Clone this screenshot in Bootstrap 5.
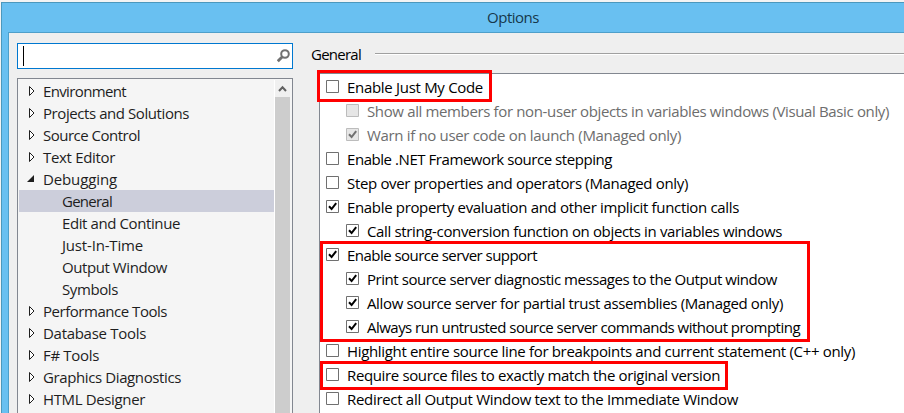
<!DOCTYPE html>
<html lang="en">
<head>
<meta charset="utf-8">
<title>Options</title>
<link href="https://cdn.jsdelivr.net/npm/bootstrap@5.3.0/dist/css/bootstrap.min.css" rel="stylesheet">
<style>
body{width:904px;height:413px;background:#f4f4f4;font-family:"Open Sans","Noto Sans",sans-serif;font-size:15px;line-height:22px;color:#1e1e1e;letter-spacing:-.2px}
.window-frame{margin:2px 0 0 1px;height:411px;border:solid #4c98bd;border-width:1px 0 0 1px;background:#69c0f1}
.title-row{height:29px;padding-left:485px;padding-top:3px;color:#16384b}
.client{margin-left:6px;height:381px;border:solid #4e9fca;border-width:1px 0 0 1px;background:#efefef;padding-left:8px}
.left-pane{width:276px;padding-top:10px}
.search-box{height:26px;border:1px solid #0078d0;background:#fff;padding:0 2px 0 5px}
.caret{width:1px;height:20px;background:#000}
.tree{margin-top:9px;height:336px;border:1px solid #828790;background:#f5f5f5;padding:1px 2px 0 1px}
.tree-row{height:22px;padding-left:8px}
.tree-row svg{width:16px;height:22px;flex:none}
.tree-row.sub{padding-left:43px}
.tree-row.picked{background:#cccedb}
.scroller{width:16px;border-left:1px solid #fff;background:#cdcdcd}
.scroller svg{display:block;background:#f0f0f0}
.right-pane{margin-left:18px;padding-top:10px;color:#000}
.pane-head{height:22px}
.rule{height:2px;margin-left:14px;background:#fff;border-top:1px solid #a0a0a0}
.options{margin:8px 0 0 8px;height:341px;border:solid #828790;border-width:1px 0 0 1px;background:#fff;padding:1px 0 0 6px}
.opt{height:24px}
.opt.sub{padding-left:20px}
.opt svg{width:13px;height:13px;margin:5px 8px 0 0;flex:none}
.opt span{line-height:24px}
.opt.off{color:#6d6d6d}
.hl{border:3px solid #f00}
.hl-a{left:317px;top:70px;width:175px;height:32px}
.hl-b{left:320px;top:241px;width:490px;height:101px}
.hl-c{left:320px;top:361px;width:408px;height:29px}
</style>
</head>
<body class="overflow-hidden position-relative">
<svg class="d-none">
<symbol id="shut" viewBox="0 0 16 22"><path d="M2.5 6.5v9l4.5-4.5z" fill="#fff" stroke="#1e1e1e"/></symbol>
<symbol id="open" viewBox="0 0 16 22"><path d="M7 7v7H0z" fill="#1e1e1e"/></symbol>
<symbol id="box" viewBox="0 0 13 13"><path d="M.5.5h12v12H.5z" fill="#fff" stroke="#707070"/></symbol>
<symbol id="tick" viewBox="0 0 13 13"><path d="M.5.5h12v12H.5z" fill="#fff" stroke="#707070"/><path d="M3 6.3 5.6 9 10.2 3.2" fill="none" stroke="#000" stroke-width="2"/></symbol>
<symbol id="boxoff" viewBox="0 0 13 13"><path d="M.5.5h12v12H.5z" fill="#e6e6e6" stroke="#bcbcbc"/></symbol>
<symbol id="tickoff" viewBox="0 0 13 13"><path d="M.5.5h12v12H.5z" fill="#e6e6e6" stroke="#bcbcbc"/><path d="M3 6.3 5.6 9 10.2 3.2" fill="none" stroke="#707070" stroke-width="2"/></symbol>
</svg>
<main class="window-frame text-nowrap">
<header class="title-row"><span data-w="52">Options</span></header>
<div class="client d-flex">
<aside class="left-pane flex-shrink-0">
<div class="search-box d-flex align-items-center justify-content-between"><div class="caret"></div>
<svg width="13" height="14" viewBox="0 0 13 14"><circle cx="8" cy="5" r="3.8" fill="none" stroke="#717171" stroke-width="2"/><path d="M5.3 7.7.8 12.2" stroke="#717171" stroke-width="2.8"/></svg></div>
<div class="tree d-flex">
<div class="flex-grow-1" id="tree"></div>
<div class="scroller"><svg width="15" height="17" viewBox="0 0 15 17"><path d="M4 11l3.5-3.8L11 11" fill="none" stroke="#606060" stroke-width="2"/></svg></div>
</div>
</aside>
<section class="right-pane flex-grow-1">
<div class="pane-head d-flex align-items-center"><span data-w="50">General</span><div class="rule flex-grow-1"></div></div>
<div class="options" id="options"></div>
</section>
</div>
</main>
<div class="hl hl-a position-absolute"></div>
<div class="hl hl-b position-absolute"></div>
<div class="hl hl-c position-absolute"></div>
<script src="https://cdn.jsdelivr.net/npm/bootstrap@5.3.0/dist/js/bootstrap.bundle.min.js"></script>
<script>
// [label, label width, icon ('' for a child), row class]
const tree = [
 ['Environment',83,'shut'],['Projects and Solutions',146,'shut'],['Source Control',97,'shut'],['Text Editor',72,'shut'],['Debugging',74,'open'],
 ['General',50,'','sub picked'],['Edit and Continue',118,'','sub'],['Just-In-Time',81,'','sub'],['Output Window',105,'','sub'],['Symbols',56,'','sub'],
 ['Performance Tools',124,'shut'],['Database Tools',103,'shut'],['F# Tools',56,'shut'],['Graphics Diagnostics',138,'shut'],['HTML Designer',102,'shut']];
const options = [
 ['Enable Just My Code',136,'box'],
 ['Show all members for non-user objects in variables windows (Visual Basic only)',522,'boxoff','sub off'],
 ['Warn if no user code on launch (Managed only)',314,'tickoff','sub off'],
 ['Enable .NET Framework source stepping',265,'box'],
 ['Step over properties and operators (Managed only)',341,'box'],
 ['Enable property evaluation and other implicit function calls',392,'tick'],
 ['Call string-conversion function on objects in variables windows',415,'tick','sub'],
 ['Enable source server support',190,'tick'],
 ['Print source server diagnostic messages to the Output window',410,'tick','sub'],
 ['Allow source server for partial trust assemblies (Managed only)',416,'tick','sub'],
 ['Always run untrusted source server commands without prompting',433,'tick','sub'],
 ['Highlight entire source line for breakpoints and current statement (C++ only)',508,'box'],
 ['Require source files to exactly match the original version',373,'box'],
 ['Redirect all Output Window text to the Immediate Window',391,'box']];
const icon = id => id ? `<svg><use href="#${id}"/></svg>` : '';
const fill = (id, rows, cls) => document.getElementById(id).innerHTML = rows.map(([t, w, i, c = '']) =>
 `<div class="${cls} ${c} d-flex">${icon(i)}<span data-w="${w}">${t}</span></div>`).join('');
fill('tree', tree, 'tree-row');
fill('options', options, 'opt');
// Track each label to its intended width.
document.querySelectorAll('[data-w]').forEach(s => {
 s.style.letterSpacing = '0px';
 s.style.letterSpacing = ((s.dataset.w - s.getBoundingClientRect().width) / s.textContent.length).toFixed(3) + 'px';
});
</script>
</body>
</html>
